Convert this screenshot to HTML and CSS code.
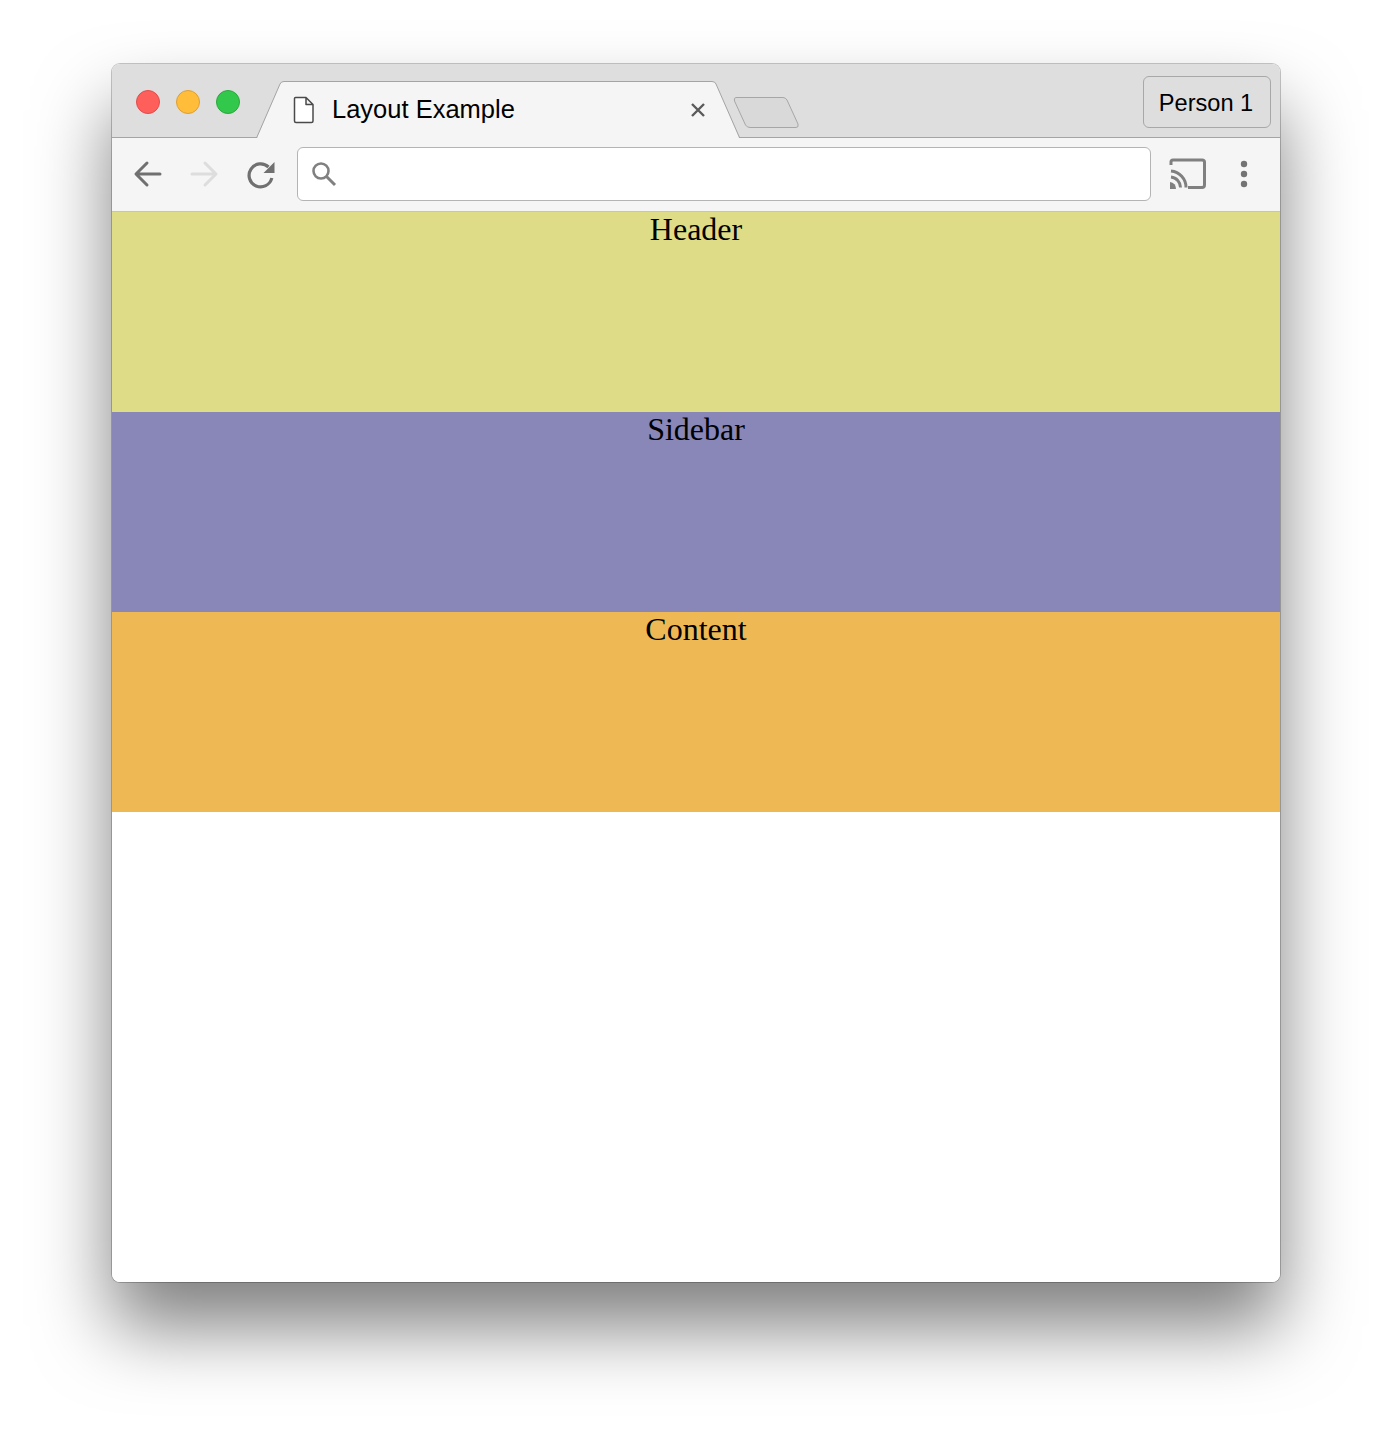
FILE: index.html
```html
<!DOCTYPE html>
<html lang="en">
<head>
<meta charset="utf-8">
<title>Layout Example</title>
<link rel="stylesheet" href="styles.css">
</head>
<body>
<div class="window">
  <div class="titlebar">
    <div class="lights">
      <span class="light light-red"></span>
      <span class="light light-yellow"></span>
      <span class="light light-green"></span>
    </div>
    <div class="tab">
      <svg class="tab-shape" width="484" height="58" viewBox="0 0 484 58">
        <path d="M0.5 58 L24 3 Q25 0.5 28 0.5 H456 Q459 0.5 460 3 L483.5 58 Z" fill="#f5f5f5"/>
        <path d="M0.5 57 L24 3 Q25 0.5 28 0.5 H456 Q459 0.5 460 3 L483.5 56.5" fill="none" stroke="#a4a4a4" stroke-width="1"/>
      </svg>
      <svg class="file-icon" width="22" height="28" viewBox="0 0 22 28">
        <path d="M2.5 1.5 H13 L20 8.5 V25 Q20 26.5 18.5 26.5 H3 Q1.5 26.5 1.5 25 V2.5 Q1.5 1.5 2.5 1.5 Z M13 1.5 V8.5 H20" fill="#fff" stroke="#4a4a4a" stroke-width="1.5" stroke-linejoin="round"/>
      </svg>
      <span class="tab-title">Layout Example</span>
      <svg class="tab-close" width="16" height="16" viewBox="0 0 16 16">
        <path d="M2 2 L14 14 M14 2 L2 14" stroke="#5a5a5a" stroke-width="2.4" fill="none"/>
      </svg>
    </div>
    <svg class="new-tab" width="67" height="33" viewBox="0 0 67 33">
      <path d="M3 1.5 H50 Q52.500 1.500 54 4 L65 28 Q66 31.500 63 31.500 H17 Q14 31.500 12.500 29 L1.500 5 Q0.500 1.500 3 1.500 Z" fill="#d9d9d9" stroke="#a6a6a6" stroke-width="1"/>
    </svg>
    <div class="person">Person 1</div>
  </div>
  <div class="toolbar">
    <svg class="nav" width="30" height="30" viewBox="0 0 30 30">
      <path d="M27 15 H3.500 M14 4 L3 15 L14 26" stroke="#707070" stroke-width="3" fill="none" stroke-linecap="round" stroke-linejoin="round"/>
    </svg>
    <svg class="nav" width="30" height="30" viewBox="0 0 30 30">
      <path d="M3 15 H26.500 M16 4 L27 15 L16 26" stroke="#dddddd" stroke-width="3" fill="none" stroke-linecap="round" stroke-linejoin="round"/>
    </svg>
    <svg class="nav nav-reload" width="30" height="30" viewBox="0 0 30 30">
      <path d="M24.800 19 A11.500 11.500 0 1 1 21.500 8" stroke="#707070" stroke-width="3.200" fill="none"/>
      <path d="M27.500 3 V14 H16.500 Z" fill="#707070"/>
    </svg>
    <div class="address">
      <svg width="26" height="26" viewBox="0 0 26 26">
        <circle cx="10" cy="10" r="7.500" stroke="#808080" stroke-width="2.600" fill="none"/>
        <path d="M15.500 15.500 L24 24" stroke="#808080" stroke-width="3" fill="none"/>
      </svg>
    </div>
    <svg class="cast" width="38" height="32" viewBox="0 0 38 32">
      <path d="M2 7 V4 Q2 2 4 2 H33 Q35.500 2 35.500 4 V27 Q35.500 29.500 33 29.500 H19" stroke="#808080" stroke-width="3" fill="none"/>
      <path d="M2 13 A16.500 16.500 0 0 1 17 29.500 M2 19 A10.500 10.500 0 0 1 11.500 29.500" stroke="#808080" stroke-width="3" fill="none"/>
      <path d="M1 24 A6.500 6.500 0 0 1 7 31 H1 Z" fill="#808080"/>
    </svg>
    <svg class="dots" width="8" height="28" viewBox="0 0 8 28">
      <circle cx="4" cy="4" r="3.200" fill="#737373"/>
      <circle cx="4" cy="14" r="3.200" fill="#737373"/>
      <circle cx="4" cy="24" r="3.200" fill="#737373"/>
    </svg>
  </div>
  <main class="page">
    <div class="block block-header">Header</div>
    <div class="block block-sidebar">Sidebar</div>
    <div class="block block-content">Content</div>
  </main>
</div>
</body>
</html>
```
FILE: styles.css
```css
* {
  box-sizing: border-box;
}

html,
body {
  margin: 0;
  background: #fff;
}

body {
  padding: 64px 112px 0;
  height: 1442px;
  overflow: hidden;
}

.window {
  width: 1168px;
  height: 1218px;
  border-radius: 8px;
  background: #fff;
  box-shadow: 0 0 0 1px rgba(0, 0, 0, 0.22), 0 45px 75px 0 rgba(0, 0, 0, 0.5);
  overflow: hidden;
  display: flex;
  flex-direction: column;
}

.titlebar {
  height: 74px;
  flex: none;
  display: flex;
  align-items: flex-start;
  background: #dedede;
  border-bottom: 1px solid #a4a4a4;
  padding-left: 24px;
  padding-right: 9px;
}

.lights {
  display: flex;
  gap: 16px;
  margin-top: 26px;
}

.light {
  width: 24px;
  height: 24px;
  border-radius: 50%;
}

.light-red {
  background: #ff5f5b;
  border: 1px solid #e24b4b;
}

.light-yellow {
  background: #ffbd3a;
  border: 1px solid #dd9f34;
}

.light-green {
  background: #32c84b;
  border: 1px solid #2aa83c;
}

.tab {
  position: relative;
  width: 484px;
  height: 57px;
  margin-top: 17px;
  margin-left: 16px;
  flex: none;
  display: flex;
  align-items: center;
  padding-left: 37px;
  padding-top: 1px;
}

.tab-shape {
  position: absolute;
  left: 0;
  top: 0;
}

.file-icon,
.tab-title,
.tab-close {
  position: relative;
}

.tab-title {
  margin-left: 17px;
  margin-bottom: 2px;
  font: 25.500px "Liberation Sans", Arial, sans-serif;
  color: #000;
  white-space: nowrap;
  width: 358px;
}

.new-tab {
  flex: none;
  margin-top: 32px;
  margin-left: -7px;
}

.person {
  margin-left: auto;
  margin-top: 12px;
  width: 128px;
  height: 52px;
  border: 1px solid #a8a8a8;
  border-radius: 6px;
  display: flex;
  align-items: center;
  justify-content: center;
  padding: 2px 2px 0 0;
  font: 23.600px "Liberation Sans", Arial, sans-serif;
  color: #000;
}

.toolbar {
  height: 74px;
  flex: none;
  display: flex;
  align-items: center;
  background: #f5f5f5;
  border-bottom: 1px solid #c4c4c4;
  padding-left: 21px;
  padding-bottom: 1px;
}

.nav {
  flex: none;
  margin-right: 26px;
}

.nav-reload {
  margin-left: 2px;
}

.address {
  width: 854px;
  height: 54px;
  margin-left: -6px;
  flex: none;
  background: #fff;
  border: 1px solid #b4b4b4;
  border-radius: 6px;
  display: flex;
  align-items: center;
  padding-left: 13px;
}

.cast {
  flex: none;
  margin-left: 18px;
}

.dots {
  flex: none;
  margin-left: 33px;
}

.page {
  flex: 1;
  background: #fff;
}

.block {
  height: 200px;
  font: 32px/34px "Liberation Serif", "Times New Roman", serif;
  color: #000;
  text-align: center;
}

.block-header {
  background: #dedc87;
}

.block-sidebar {
  background: #8986b8;
}

.block-content {
  background: #eeb954;
}
```
